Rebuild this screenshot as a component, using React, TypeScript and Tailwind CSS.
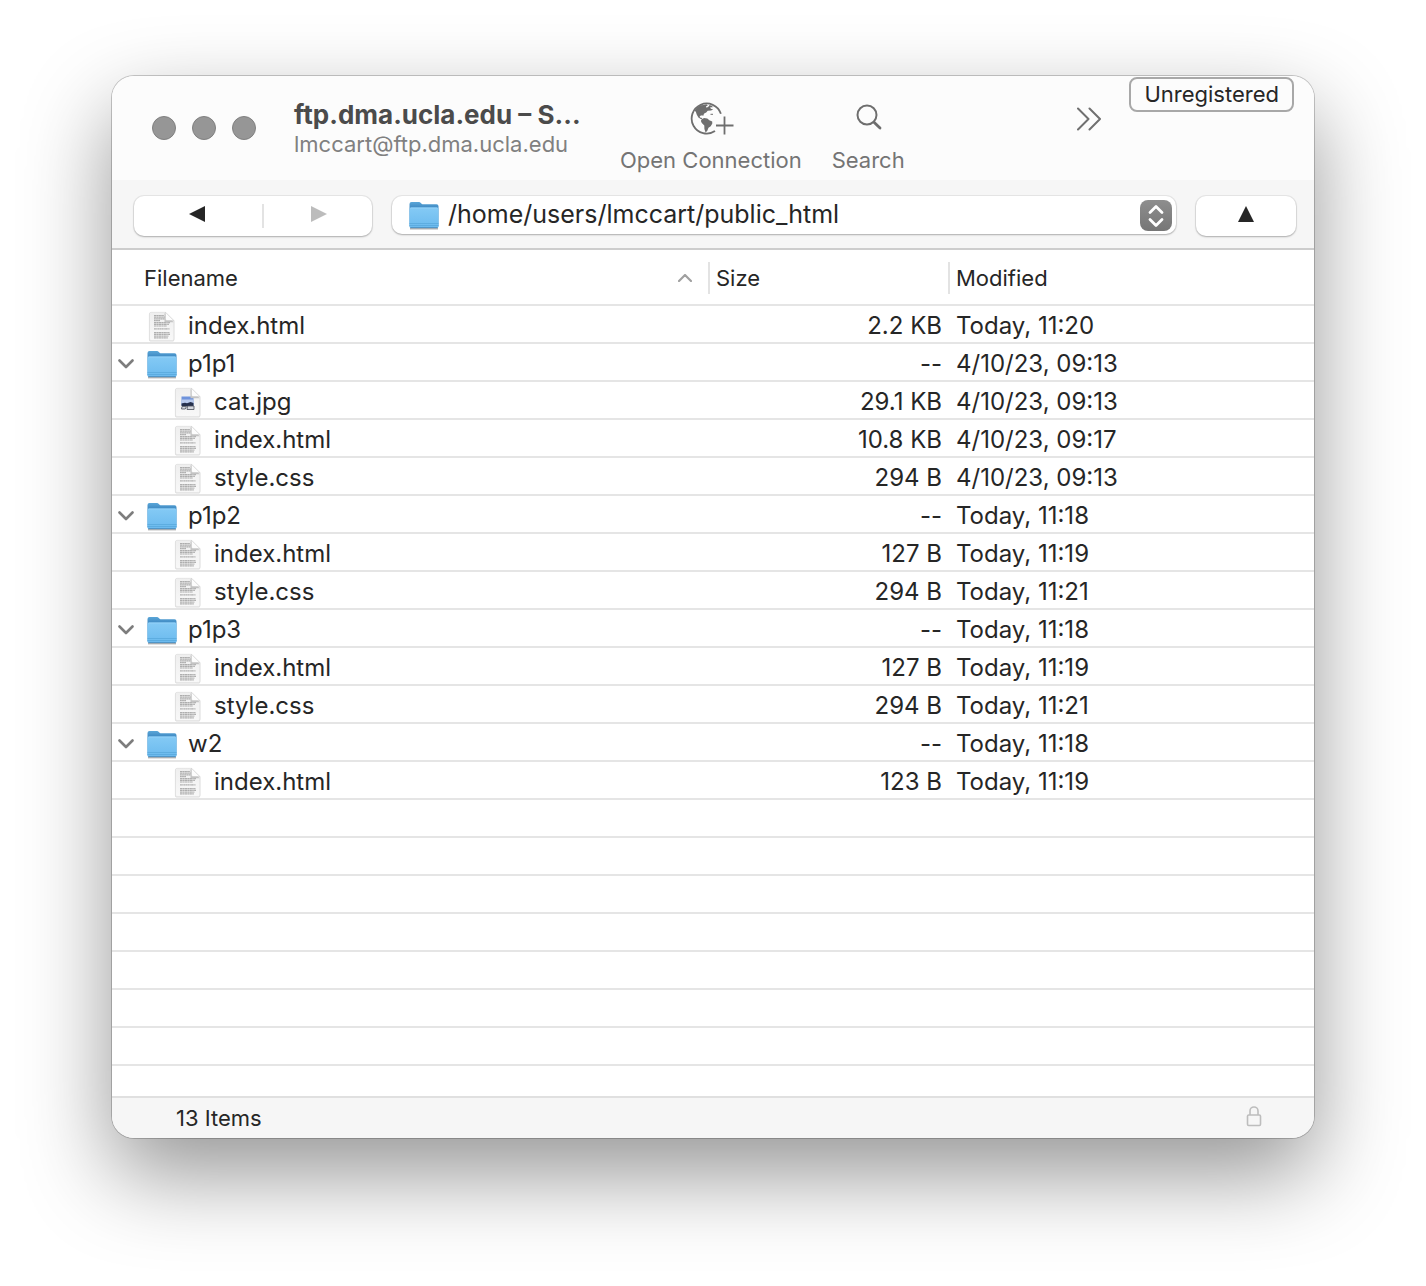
import React from "react";

type Kind = "text" | "image" | "folder";

interface Entry {
  name: string;
  kind: Kind;
  size: string;
  modified: string;
  child?: boolean;
}

const entries: Entry[] = [
  { name: "index.html", kind: "text", size: "2.2 KB", modified: "Today, 11:20" },
  { name: "p1p1", kind: "folder", size: "--", modified: "4/10/23, 09:13" },
  { name: "cat.jpg", kind: "image", size: "29.1 KB", modified: "4/10/23, 09:13", child: true },
  { name: "index.html", kind: "text", size: "10.8 KB", modified: "4/10/23, 09:17", child: true },
  { name: "style.css", kind: "text", size: "294 B", modified: "4/10/23, 09:13", child: true },
  { name: "p1p2", kind: "folder", size: "--", modified: "Today, 11:18" },
  { name: "index.html", kind: "text", size: "127 B", modified: "Today, 11:19", child: true },
  { name: "style.css", kind: "text", size: "294 B", modified: "Today, 11:21", child: true },
  { name: "p1p3", kind: "folder", size: "--", modified: "Today, 11:18" },
  { name: "index.html", kind: "text", size: "127 B", modified: "Today, 11:19", child: true },
  { name: "style.css", kind: "text", size: "294 B", modified: "Today, 11:21", child: true },
  { name: "w2", kind: "folder", size: "--", modified: "Today, 11:18" },
  { name: "index.html", kind: "text", size: "123 B", modified: "Today, 11:19", child: true },
];

const emptyRows = [0, 1, 2, 3, 4, 5, 6];

function Gradients() {
  return (
    <svg width="0" height="0" className="absolute" aria-hidden="true">
      <defs>
        <linearGradient id="folderBack" x1="0" y1="0" x2="0" y2="1">
          <stop offset="0" stopColor="#5aa6d8" />
          <stop offset="0.25" stopColor="#3c86c0" />
          <stop offset="1" stopColor="#4f9dd2" />
        </linearGradient>
        <linearGradient id="folderFront" x1="0" y1="0" x2="0" y2="1">
          <stop offset="0" stopColor="#84caf5" />
          <stop offset="1" stopColor="#6bbaee" />
        </linearGradient>
        <linearGradient id="paper" x1="0" y1="0" x2="0" y2="1">
          <stop offset="0" stopColor="#efefef" />
          <stop offset="1" stopColor="#f8f8f8" />
        </linearGradient>
      </defs>
    </svg>
  );
}

function FolderIcon({ className }: { className: string }) {
  return (
    <svg viewBox="0 0 32 32" className={className} aria-hidden="true">
      <path d="M2 29.500h28" stroke="#000" strokeOpacity="0.3" strokeWidth="1.800" />
      <path
        d="M1.500 5a2 2 0 0 1 2-2h7.100c1 0 1.500.3 2.200 1l.8.7c.5.5 1 .6 1.800.6h13.100a2 2 0 0 1 2 2V27a2 2 0 0 1-2 2h-25a2 2 0 0 1-2-2z"
        fill="url(#folderBack)"
      />
      <path d="M1.500 10a1.600 1.600 0 0 1 1.600-1.600h25.800A1.600 1.600 0 0 1 30.500 10v17a2 2 0 0 1-2 2h-25a2 2 0 0 1-2-2z" fill="url(#folderFront)" />
      <path d="M2.500 9h27" stroke="#9ad6fa" strokeWidth="0.8" />
      <path d="M1.500 24.500h29M1.500 26.500h29" stroke="#58a8dc" strokeWidth="0.8" />
      <path d="M2.400 28.700h27.200" stroke="#4788b8" strokeWidth="0.9" />
    </svg>
  );
}

function PageShape() {
  return (
    <>
      <path d="M5 3h14.500l8.300 8.300V29.500A1.500 1.500 0 0 1 26.300 31H5a1.500 1.500 0 0 1-1.500-1.500v-25A1.500 1.500 0 0 1 5 3z" fill="none" stroke="#000" strokeOpacity="0.14" strokeWidth="1.200" />
      <path d="M5 2.300h14.500l8.300 8.300V29a1.500 1.500 0 0 1-1.500 1.500H5A1.500 1.500 0 0 1 3.500 29V3.800A1.500 1.500 0 0 1 5 2.300z" fill="url(#paper)" stroke="#dedede" strokeWidth="0.6" />
    </>
  );
}

function PageFold() {
  return (
    <>
      <path d="M18.500 3v9.200h9.200z" fill="#c4c4c4" />
      <path d="M19.500 2.300v6.800a1.500 1.500 0 0 0 1.500 1.500h6.800z" fill="#fdfdfd" stroke="#c4c4c4" strokeWidth="0.5" />
    </>
  );
}

function TextFileIcon() {
  return (
    <svg viewBox="0 0 32 32" className="size-8" aria-hidden="true">
      <PageShape />
      <g stroke="#808080" strokeOpacity="0.6" strokeWidth="1.200" fill="none">
        <path d="M8 5.500h10M8 7.200h11" strokeDasharray="2.300 .3 1.700 .3" />
        <path d="M8 8.900h11M8 10.600h6" strokeDasharray="1.800 .3" />
        <path d="M8 12.600h16M8 14.300h15M8 16h13" strokeDasharray="2.700 .3 1.400 .3" />
        <path d="M8 18.800h15.500" strokeDasharray="1.900 .3 1.200 .3" />
        <path d="M8 22.700h15.500M8 24.400h16M8 26.100h14.500M8 27.800h14" strokeDasharray="2.500 .3 1.600 .3" />
      </g>
      <PageFold />
    </svg>
  );
}

function ImageFileIcon() {
  return (
    <svg viewBox="0 0 32 32" className="size-8" aria-hidden="true">
      <PageShape />
      <rect x="9.500" y="10.500" width="12" height="9" fill="#6f93dc" />
      <rect x="9.500" y="13.500" width="12" height="4" fill="#b9caec" />
      <path d="M9.500 17.500l3.500-.8 2 .6 3.500-1.300 3 1v3h-12z" fill="#26304c" />
      <path d="M10 20.500h4.500l-1.200 2.500H9.500zM15.500 20h6.500v3.500h-7z" fill="#d5d8df" stroke="#4a4f5b" strokeWidth="0.8" />
      <PageFold />
    </svg>
  );
}

function GlobePlusIcon() {
  return (
    <svg viewBox="0 0 44 34" className="h-[34px] w-11" aria-hidden="true">
      <path d="M30.900 12.800A15 15 0 1 0 25 30" fill="none" stroke="#6e6e6e" strokeWidth="1.800" />
      <path
        d="M4.600 9.500l2.200-3 3.600-2.200 3.200-.3 2.800-.8 1.500 1-2 1.200.8 1.300 1.900-1.300 1-1.300 2.600.8.500 1.300-2.500.1.600 1.400 2.400.8-2.200.9-3.300.4-1.500 1.800-2 .9-1 1.900.5.900-1.600-1-2.300.6.100 1.600 1.500.2 1.300 1.600-2-.2-2.300-1.700-1.700-2.800-.8-2.600z"
        fill="#6e6e6e"
      />
      <path d="M11.500 18.600l2.500-1.700 3.300.6 2 1.800 2.900 1.100.1 2.200-1.600 2.700-2.200 1.500-1.200 3-1.700 1.700-1.200-3.500-.1-3.500-2.500-2.600-.9-1.800z" fill="#6e6e6e" />
      <path d="M20.500 13.300h2.500" stroke="#6e6e6e" strokeWidth="1" />
      <path d="M26 24.500h17.500M34.500 15.500v18" stroke="#6e6e6e" strokeWidth="1.800" />
    </svg>
  );
}

function SearchIcon() {
  return (
    <svg viewBox="0 0 28 28" className="size-7" fill="none" stroke="#6e6e6e" aria-hidden="true">
      <circle cx="12" cy="11" r="9.500" strokeWidth="2" />
      <path d="M19 18.200l6 5.800" strokeWidth="2.800" strokeLinecap="round" />
    </svg>
  );
}

function ToolButton({ label, children }: { label: string; children: React.ReactNode }) {
  return (
    <button type="button" className="flex flex-col items-center whitespace-nowrap text-[22px] leading-7 text-[#747474]">
      <span className="mb-2.5 flex h-9 items-center pl-0.5">{children}</span>
      {label}
    </button>
  );
}

function EntryRow({ entry }: { entry: Entry }) {
  return (
    <tr>
      <td className="h-[38px] border-b-2 border-[#e5e5e5] p-0">
        <div className="flex h-9 items-center pl-1.5">
          {entry.kind === "folder" ? (
            <button type="button" aria-label={"Collapse " + entry.name} className="w-4 pt-1">
              <svg viewBox="0 0 16 10" className="h-2.5 w-4" fill="none" stroke="#7d7d7d" strokeWidth="2.600" strokeLinecap="round" strokeLinejoin="round">
                <path d="M1.500 1.500L8 8l6.500-6.500" />
              </svg>
            </button>
          ) : (
            <span className={entry.child ? "w-[42px]" : "w-4"} />
          )}
          <span className="mr-2.5 ml-3 pt-1">
            {entry.kind === "folder" && <FolderIcon className="size-8" />}
            {entry.kind === "text" && <TextFileIcon />}
            {entry.kind === "image" && <ImageFileIcon />}
          </span>
          <span className="pt-1">{entry.name}</span>
        </div>
      </td>
      <td className="border-b-2 border-[#e5e5e5] p-0 pt-1 pr-1.5 text-right">{entry.size}</td>
      <td className="border-b-2 border-[#e5e5e5] p-0 pt-1 pl-2">{entry.modified}</td>
    </tr>
  );
}

export default function App() {
  return (
    <div className="min-h-screen bg-white px-28 pt-[76px] pb-[148px] font-['Inter','Liberation_Sans',sans-serif] text-[#262626]">
      <Gradients />
      <main className="overflow-hidden rounded-[22px] bg-white shadow-[0_0_0_1px_rgba(0,0,0,0.2),0_36px_88px_rgba(0,0,0,0.42)]">
        <header className="flex h-[104px] bg-[#fcfcfc] pr-5 pl-10">
          <div className="mt-10 flex gap-4">
            <button type="button" aria-label="Close" className="size-6 rounded-full border border-[#808080] bg-[#969696]" />
            <button type="button" aria-label="Minimize" className="size-6 rounded-full border border-[#808080] bg-[#969696]" />
            <button type="button" aria-label="Zoom" className="size-6 rounded-full border border-[#808080] bg-[#969696]" />
          </div>
          <div className="mt-6 ml-[38px] w-[326px] whitespace-nowrap">
            <h1 className="text-[26px] leading-[30px] font-bold text-[#4b4b4b]">ftp.dma.ucla.edu – S...</h1>
            <p className="text-[22px] leading-7 text-[#808080]">lmccart@ftp.dma.ucla.edu</p>
          </div>
          <div className="mt-6 flex items-start gap-[30px]">
            <ToolButton label="Open Connection">
              <GlobePlusIcon />
            </ToolButton>
            <ToolButton label="Search">
              <SearchIcon />
            </ToolButton>
          </div>
          <button type="button" aria-label="More toolbar items" className="mt-[30px] mr-[26px] ml-auto self-start">
            <svg viewBox="0 0 26 26" className="size-[26px]" fill="none" stroke="#707070" strokeWidth="2" strokeLinecap="round" strokeLinejoin="round">
              <path d="M1 2.500L11.500 13 1 23.500M12.500 2.500L23 13 12.500 23.500" />
            </svg>
          </button>
          <button type="button" className="mt-px h-[35px] self-start rounded-lg border-2 border-[#a8a8a8] px-[13px] text-[22px] leading-[31px]">
            Unregistered
          </button>
        </header>

        <div className="flex h-[70px] gap-5 border-b-2 border-[#cdcdcd] bg-[#f6f6f6] pt-4 pr-[18px] pl-[22px]">
          <div className="flex h-10 w-[238px] items-center rounded-[10px] bg-white shadow-[0_0_0_1px_rgba(0,0,0,0.06),0_1px_2px_rgba(0,0,0,0.25)]">
            <button type="button" aria-label="Back" className="flex h-10 w-32 items-center justify-center">
              <svg viewBox="0 0 16 16" className="mr-0.5 mb-1 size-4"><path d="M0 8L16 0v16z" fill="#262626" /></svg>
            </button>
            <span className="h-6 w-0.5 bg-[#e3e3e3]" />
            <button type="button" aria-label="Forward" className="flex h-10 flex-1 items-center justify-center">
              <svg viewBox="0 0 16 16" className="mb-1 ml-0.5 size-4"><path d="M16 8L0 0v16z" fill="#bcbcbc" /></svg>
            </button>
          </div>
          <div className="relative h-[38px] flex-1">
            <select
              aria-label="Current folder"
              className="h-[38px] w-full appearance-none rounded-[10px] bg-white pr-14 pl-14 text-[25px] shadow-[0_0_0_1px_rgba(0,0,0,0.06),0_1px_2px_rgba(0,0,0,0.25)]"
            >
              <option>/home/users/lmccart/public_html</option>
            </select>
            <FolderIcon className="pointer-events-none absolute top-[3px] left-4 size-8" />
            <span className="pointer-events-none absolute top-1 right-1 flex h-[31px] w-8 items-center justify-center rounded-lg bg-linear-to-b from-[#8e8e8e] to-[#767676]">
              <svg viewBox="0 0 16 24" className="h-6 w-4" fill="none" stroke="#fff" strokeWidth="2.800" strokeLinecap="round" strokeLinejoin="round">
                <path d="M2 8.500l6-6 6 6M2 15.500l6 6 6-6" />
              </svg>
            </span>
          </div>
          <button type="button" aria-label="Parent folder" className="flex h-10 w-[100px] items-center justify-center rounded-[10px] bg-white shadow-[0_0_0_1px_rgba(0,0,0,0.06),0_1px_2px_rgba(0,0,0,0.25)]">
            <svg viewBox="0 0 16 16" className="mb-1 size-4"><path d="M8 0l8 16H0z" fill="#262626" /></svg>
          </button>
        </div>

        <table className="w-full table-fixed border-separate border-spacing-0 text-left text-2xl leading-8 whitespace-nowrap">
          <colgroup>
            <col />
            <col className="w-60" />
            <col className="w-[366px]" />
          </colgroup>
          <thead className="text-[22px]">
            <tr>
              <th scope="col" aria-sort="ascending" className="h-14 border-b-2 border-[#e5e5e5] p-0 pt-0.5 font-normal">
                <div className="flex h-8 items-center justify-between pr-4 pl-8">
                  Filename
                  <svg viewBox="0 0 14 8" className="h-2 w-3.5" fill="none" stroke="#a0a0a0" strokeWidth="2.200" strokeLinecap="round" strokeLinejoin="round" aria-hidden="true">
                    <path d="M1 7l6-6 6 6" />
                  </svg>
                </div>
              </th>
              <th scope="col" className="border-b-2 border-[#e5e5e5] p-0 pt-0.5 font-normal">
                <div className="h-8 border-l-2 border-[#e3e3e3] pl-1.5">Size</div>
              </th>
              <th scope="col" className="border-b-2 border-[#e5e5e5] p-0 pt-0.5 font-normal">
                <div className="h-8 border-l-2 border-[#e3e3e3] pl-1.5">Modified</div>
              </th>
            </tr>
          </thead>
          <tbody>
            {entries.map((entry, i) => (
              <EntryRow key={i} entry={entry} />
            ))}
            {emptyRows.map((i) => (
              <tr key={i} aria-hidden="true">
                <td colSpan={3} className="h-[38px] border-b-2 border-[#e5e5e5] p-0" />
              </tr>
            ))}
          </tbody>
        </table>

        <footer className="mt-[30px] flex h-[42px] items-center justify-between border-t-2 border-[#e0e0e0] bg-[#f6f6f6] pr-[52px] pl-16 text-[22px]">
          <span>13 Items</span>
          <svg viewBox="0 0 16 22" className="mb-1 h-[22px] w-4" fill="none" stroke="#bdbdbd" strokeWidth="1.600" role="img" aria-label="Secure connection">
            <rect x="1.500" y="10" width="13" height="10.500" rx="1.200" />
            <path d="M4 10V6a4 4 0 0 1 8 0v4" />
          </svg>
        </footer>
      </main>
    </div>
  );
}
